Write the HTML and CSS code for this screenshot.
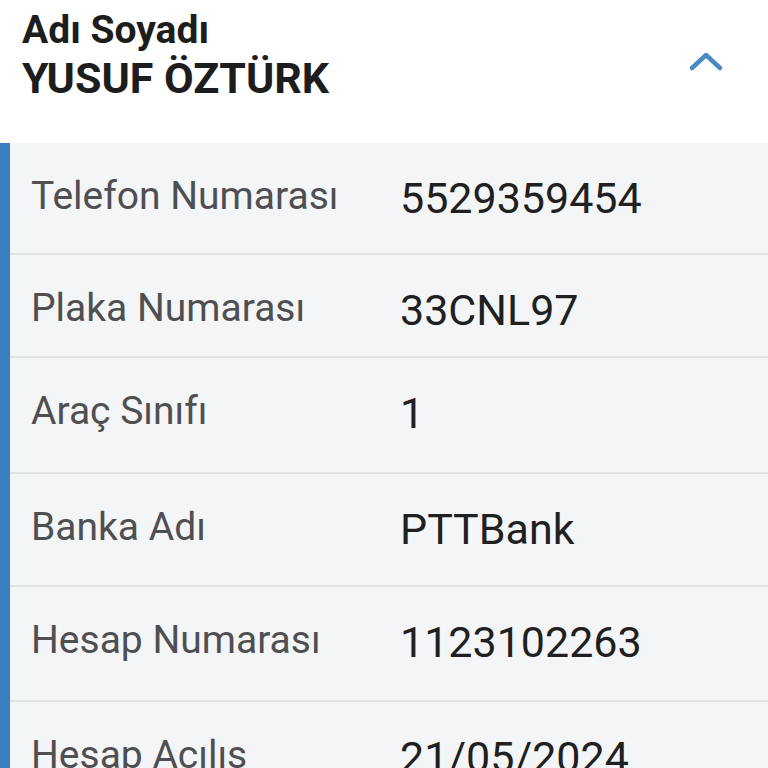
FILE: index.html
```html
<!DOCTYPE html>
<html lang="tr">
<head>
  <meta charset="UTF-8">
  <title>Müşteri Bilgileri</title>
  <link rel="stylesheet" href="styles.css">
</head>
<body>
  <div class="card">
    <div class="card-head">
      <div class="head-text">
        <div class="head-label">Adı Soyadı</div>
        <div class="head-name">YUSUF ÖZTÜRK</div>
      </div>
      <svg class="chevron" width="36" height="24" viewBox="0 0 36 24">
        <path d="M4 19 L18 6 L32 19" fill="none" stroke="#4a8ac6" stroke-width="4.5" stroke-linecap="round" stroke-linejoin="round"/>
      </svg>
    </div>

    <div class="details">
      <div class="row">
        <div class="label">Telefon Numarası</div>
        <div class="value">5529359454</div>
      </div>
      <div class="row">
        <div class="label">Plaka Numarası</div>
        <div class="value">33CNL97</div>
      </div>
      <div class="row">
        <div class="label">Araç Sınıfı</div>
        <div class="value">1</div>
      </div>
      <div class="row">
        <div class="label">Banka Adı</div>
        <div class="value">PTTBank</div>
      </div>
      <div class="row">
        <div class="label">Hesap Numarası</div>
        <div class="value">1123102263</div>
      </div>
      <div class="row">
        <div class="label">Hesap Açılış</div>
        <div class="value">21/05/2024</div>
      </div>
    </div>
  </div>
</body>
</html>
```

FILE: styles.css
```css
body {
  font-family: Roboto, "Noto Sans", sans-serif;
  background: #ffffff;
  margin: 0;
  padding: 0;
}
.card {
  width: 768px;
}
.card-head {
  display: flex;
  justify-content: space-between;
  align-items: flex-start;
  height: 143px;
  padding-left: 22px;
  padding-right: 44px;
  box-sizing: border-box;
  background: #ffffff;
}
.head-text {
  padding-top: 7px;
  color: #1d1d1d;
  font-weight: 700;
}
.head-label {
  font-size: 39px;
  line-height: 46px;
}
.head-name {
  font-size: 43px;
  line-height: 50px;
}
.chevron {
  margin-top: 49px;
}
.details {
  background: #f4f5f7;
  border-left: 10px solid #3d80c2;
}
.row {
  display: grid;
  grid-template-columns: 369px 1fr;
  padding: 30px 0 0 21px;
  box-sizing: border-box;
  border-bottom: 2px solid #e2e3e6;
  height: 113px;
}
.row:nth-child(1) { height: 112px; }
.row:nth-child(2) { height: 103px; }
.row:nth-child(3) { height: 116px; }
.row:nth-child(4) { height: 113px; }
.row:nth-child(5) { height: 115px; }
.label {
  font-size: 39px;
  line-height: 46px;
  color: #4f4f52;
}
.value {
  font-size: 43px;
  line-height: 50px;
  color: #202020;
}
```
